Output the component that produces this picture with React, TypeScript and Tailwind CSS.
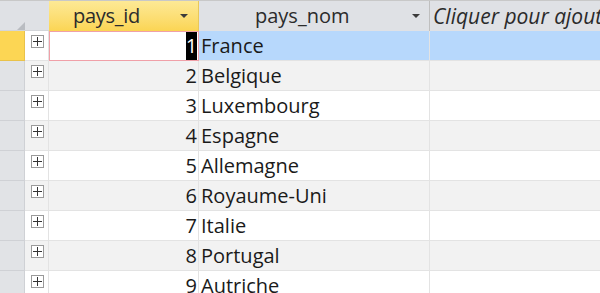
import React from "react";

const rows = [
  "France",
  "Belgique",
  "Luxembourg",
  "Espagne",
  "Allemagne",
  "Royaume-Uni",
  "Italie",
  "Portugal",
  "Autriche",
];

function Plus() {
  return (
    <div className="w-[13px] h-[13px] border border-[#9a9a9a] bg-white flex items-center justify-center">
      <svg width="9" height="9" viewBox="0 0 9 9">
        <path d="M0 4.5H9M4.5 0V9" stroke="#333" strokeWidth="1" />
      </svg>
    </div>
  );
}

function Arrow() {
  return (
    <svg width="10" height="6" viewBox="0 0 10 6">
      <path d="M1 1H9L5 5Z" fill="#3b3b3b" />
    </svg>
  );
}

export default function App() {
  return (
    <div
      className="w-[600px] h-[293px] overflow-hidden bg-white text-[20px] text-[#1a1a1a]"
      style={{ fontFamily: '"Open Sans", "Noto Sans", sans-serif' }}
    >
      {/* header */}
      <div className="flex h-[31px] border-t border-[#c8c8c8] bg-[#dfe1e5]">
        <div className="w-[49px] shrink-0 relative border-b border-[#d3d5d9]">
          <svg className="absolute left-[17px] top-[21px]" width="8" height="8" viewBox="0 0 8 8">
            <path d="M8 0V8H0Z" fill="#b9bcc1" />
          </svg>
        </div>
        <div className="w-[150px] shrink-0 flex items-center bg-gradient-to-b from-[#fde995] to-[#fbd553] border-r border-[#e8c85a] pl-[24px] pr-[9px]">
          <span className="flex-1 leading-none text-[#2b2b2b] tracking-[-0.3px]">pays_id</span>
          <Arrow />
        </div>
        <div className="w-[231px] shrink-0 flex items-center border-r border-[#bfbfbf] pl-[56px] pr-[8px]">
          <span className="flex-1 leading-none text-[#2b2b2b]">pays_nom</span>
          <Arrow />
        </div>
        <div className="flex-1 flex items-center pl-[3px] italic text-[21px] text-[#2b2b2b] whitespace-nowrap leading-none">
          Cliquer pour ajouter
        </div>
      </div>
      {rows.map((name, i) => {
        const sel = i === 0;
        const alt = i % 2 === 1;
        const bg = alt ? "bg-[#f2f2f2]" : "bg-white";
        return (
          <div key={name} className="flex h-[30px]">
            <div
              className={`w-[25px] shrink-0 border-r border-b ${
                sel ? "bg-[#fcd654] border-[#e9c24a]" : "bg-[#e1e3e6] border-[#cfd1d5]"
              }`}
            />
            <div className={`w-[24px] shrink-0 flex items-start justify-center pt-[4px] pl-[1px] border-b border-r border-[#e3e3e3] ${bg}`}>
              <Plus />
            </div>
            <div
              className={`w-[150px] shrink-0 flex justify-end leading-none ${
                sel
                  ? "bg-white border border-[#f0a0a8] items-stretch pr-[1px]"
                  : `${bg} border-b border-r border-[#e3e3e3] items-center pr-[1px]`
              }`}
            >
              {sel ? (
                <span className="bg-black text-white w-[11px] flex items-center justify-center">{i + 1}</span>
              ) : (
                <span>{i + 1}</span>
              )}
            </div>
            <div
              className={`w-[231px] shrink-0 flex items-center pl-[2px] leading-none border-b border-r border-[#e3e3e3] ${
                sel ? "bg-[#b7d8fc]" : bg
              }`}
            >
              {name}
            </div>
            <div
              className={`flex-1 border-b border-[#e3e3e3] ${sel ? "bg-[#b7d8fc]" : bg}`}
            />
          </div>
        );
      })}
    </div>
  );
}
